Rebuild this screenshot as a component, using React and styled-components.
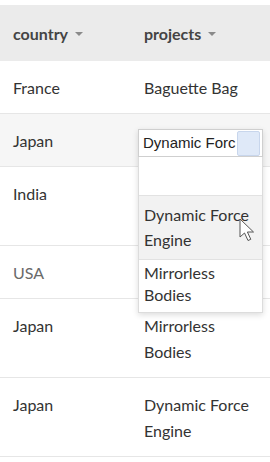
import React from "react"
import styled, { createGlobalStyle } from "styled-components"

const GlobalStyle = createGlobalStyle`
  html, body {
    margin: 0;
    padding: 0;
    background: #fff;
  }
  body {
    font-family: Lato, "Noto Sans", sans-serif;
    -webkit-font-smoothing: antialiased;
  }
`

const rows = [
  { country: "France", project: "Baguette Bag" },
  { country: "Japan", project: "Dynamic Force", editing: true, shaded: true },
  { country: "India", project: "Dynamic Force Engine", hidden: true },
  { country: "USA", project: "", muted: true },
  { country: "Japan", project: "Mirrorless Bodies" },
  { country: "Japan", project: "Dynamic Force Engine" },
]

const options = ["", "Dynamic Force Engine", "Mirrorless Bodies"]

const Table = styled.div`
  padding-top: 5px;
  width: 270px;
`

const Row = styled.div`
  display: grid;
  grid-template-columns: 131px 1fr;
  background: ${p => (p.$shaded ? "#f6f6f6" : "#fff")};
  border-bottom: 1px solid #e6e6e6;
`

const HeaderRow = styled(Row)`
  background: #ebebeb;
  border-bottom: none;
  height: 56px;
  align-items: center;
`

const HeadCell = styled.div`
  padding-left: 13px;
  font-size: 16px;
  font-weight: 700;
  color: #444;
  display: flex;
  align-items: center;
  gap: 7px;
`

const Caret = styled.span`
  width: 0;
  height: 0;
  border-left: 4px solid transparent;
  border-right: 4px solid transparent;
  border-top: 4px solid #8a8a8a;
  margin-top: 2px;
`

const Cell = styled.div`
  position: relative;
  padding: 14px 13px 12px 13px;
  font-size: 16px;
  line-height: 26px;
  color: ${p => (p.$muted ? "#6a6a6a" : "#333")};
  min-height: 26px;
  width: 110px;
`

const Hidden = styled.span`
  visibility: hidden;
`

const Editor = styled.div`
  position: absolute;
  left: 7px;
  top: 15px;
  width: 125px;
  z-index: 2;
  box-shadow: 0 2px 6px rgba(0, 0, 0, 0.14);
`

const Input = styled.div`
  box-sizing: border-box;
  height: 28px;
  border: 1px solid #cfcfcf;
  background: #fff;
  display: flex;
  align-items: center;
  padding: 0 2px 0 4px;
  font-family: "Liberation Sans", Arial, sans-serif;
  font-size: 15px;
  color: #222;
  overflow: hidden;
`

const InputText = styled.span`
  flex: 1;
  min-width: 0;
  white-space: nowrap;
  overflow: hidden;
`

const ToggleBox = styled.span`
  flex: none;
  width: 21px;
  height: 23px;
  background: #dfe9f8;
  border: 1px solid #c8d6ec;
  border-radius: 2px;
`

const List = styled.div`
  background: #fff;
  border: 1px solid #dcdcdc;
  border-top: none;
`

const Option = styled.div`
  box-sizing: border-box;
  min-height: ${p => (p.$empty ? "38px" : "auto")};
  padding: ${p => (p.$empty ? "0" : p.$active ? "6px 5px 7px 5px" : "2px 5px 6px 5px")};
  font-size: 16px;
  line-height: ${p => (p.$active ? "25px" : "22px")};
  color: #333;
  background: ${p => (p.$active ? "#f2f2f2" : "#fff")};
  border-top: ${p => (p.$first ? "none" : "1px solid #e2e2e2")};
`

const Pointer = styled.svg`
  position: absolute;
  left: 239px;
  top: 218px;
  z-index: 3;
  pointer-events: none;
`

const CellEditor = () => (
  <Editor>
    <Input>
      <InputText>Dynamic Forc</InputText>
      <ToggleBox />
    </Input>
    <List>
      {options.map((o, i) => (
        <Option key={i} $empty={!o} $first={i === 0} $active={i === 1}>
          {o}
        </Option>
      ))}
    </List>
  </Editor>
)

export default function App() {
  return (
    <>
      <GlobalStyle />
      <Table>
        <HeaderRow>
          <HeadCell>
            country <Caret />
          </HeadCell>
          <HeadCell>
            projects <Caret />
          </HeadCell>
        </HeaderRow>
        {rows.map((r, i) => (
          <Row key={i} $shaded={r.shaded}>
            <Cell $muted={r.muted}>{r.country}</Cell>
            <Cell>
              {r.editing ? <CellEditor /> : r.hidden ? <Hidden>{r.project}</Hidden> : r.project}
            </Cell>
          </Row>
        ))}
      </Table>
      <Pointer width="18" height="24" viewBox="0 0 18 24">
        <path
          d="M1 1 L1 19 L5.5 15 L9 22.5 L11.8 21.3 L8.4 14 L14.5 14 Z"
          fill="#fff"
          stroke="#555"
          strokeWidth="1"
          strokeLinejoin="round"
        />
      </Pointer>
    </>
  )
}
